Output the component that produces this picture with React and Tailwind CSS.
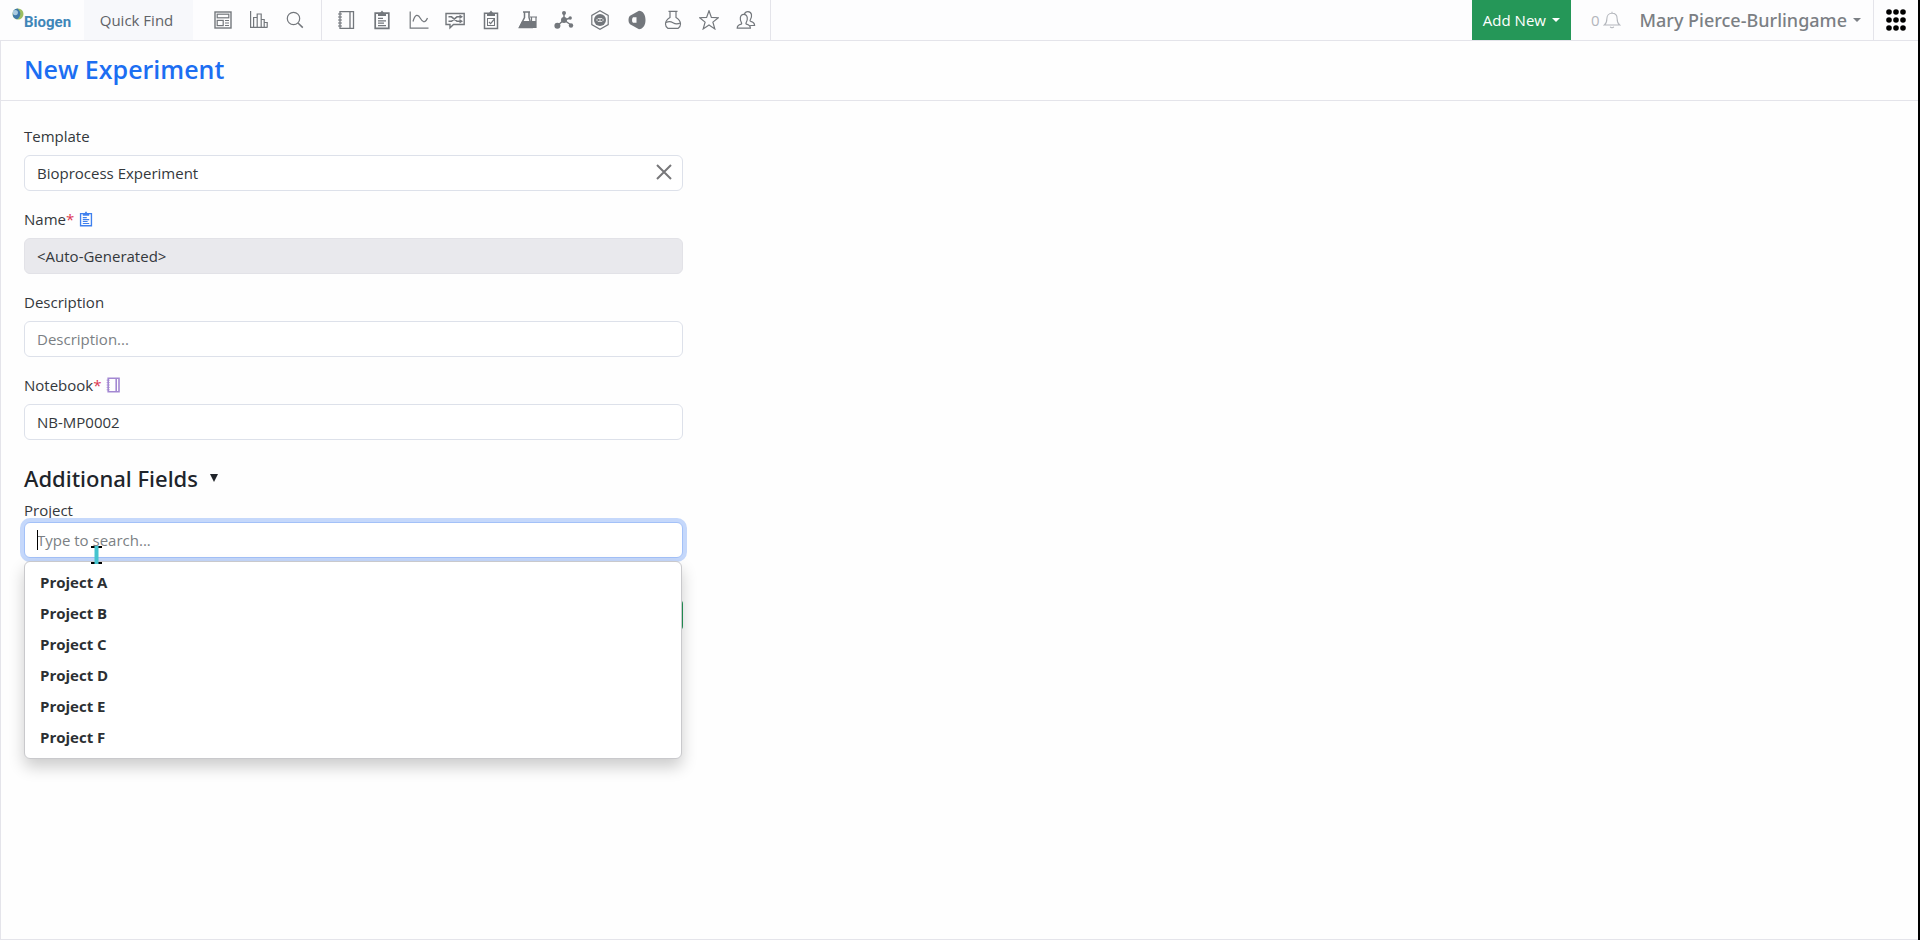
import React, { useState } from 'react';

const Svg = ({ size = 20, children, ...rest }) => (
  <svg width={size} height={size} viewBox="0 0 20 20" fill="none" stroke="currentColor" strokeWidth="1.2" {...rest}>
    {children}
  </svg>
);

const DashboardIcon = () => (
  <Svg>
    <rect x="2" y="2" width="16" height="16" strokeWidth="1.4" />
    <rect x="4.2" y="4.2" width="11.6" height="3.6" />
    <rect x="4.2" y="10.4" width="6" height="5.2" />
    <path d="M12 10.5h4M12 13h4M12 15.5h4" />
  </Svg>
);

const ChartIcon = () => (
  <Svg>
    <path d="M1.6 1v16.4h17M4.6 17V7.5h3.6V17M8.2 17V4h4V17M12.2 9.5h3V17M15.2 12.5h3V17" />
  </Svg>
);

const SearchIcon = () => (
  <Svg>
    <circle cx="8.5" cy="8.5" r="6.2" />
    <path d="M13 13l4.8 4.6" strokeWidth="1.5" />
  </Svg>
);

const NotebookIcon = ({ size, strokeWidth = 1.3 }) => (
  <Svg size={size} strokeWidth={strokeWidth}>
    <path d="M4 1.6h13.5v16.8H4zM14 1.6v16.8" />
    <path d="M2 4h4M2 7h4M2 10h4M2 13h4M2 16h4" strokeWidth="1" />
  </Svg>
);

const ClipboardIcon = ({ size }) => (
  <Svg size={size}>
    <path d="M3.2 3.2h13.6v15.2H3.2z" strokeWidth="1.7" />
    <path d="M6 6V3h2l2-2.6L12 3h2v3z" fill="currentColor" stroke="none" />
    <path d="M6 8.3h5M6 10.8h8M6 13.2h6M6 15.6h8" strokeWidth="1.3" />
  </Svg>
);

const CurveIcon = () => (
  <Svg>
    <path d="M1.2 1.5v16.7h18.3" />
    <path d="M4 11.5C6 4 9 3.8 11.5 8.5s5 4.2 7-.5" />
  </Svg>
);

const WorkflowIcon = () => (
  <Svg>
    <path d="M1 3.5h18.2v11H8.5L5 17.8v-3.3H1z" strokeWidth="1.4" />
    <path d="M3.5 6.8h3l5.5 4.5h4M3.5 11.3h3L12 6.8h4" strokeWidth="1.6" />
    <path d="M14.5 4.6L18 6.8 14.5 9zM14.5 9.1l3.5 2.2-3.5 2.2z" fill="currentColor" stroke="none" />
  </Svg>
);

const TaskIcon = () => (
  <Svg>
    <path d="M3.5 3.2h13v15.2h-13z" strokeWidth="1.5" />
    <path d="M6 6V3h2l2-2.6L12 3h2v3z" fill="currentColor" stroke="none" />
    <rect x="6.5" y="8.5" width="7" height="7" strokeWidth="1" />
    <path d="M8 12l1.6 1.6L13.5 9" />
  </Svg>
);

const LabIcon = () => (
  <Svg>
    <path d="M5 2h7M6.5 2v5.5l-5 10H14l-3-10V2" strokeWidth="1.5" />
    <path d="M4.5 11.5H12l2 6H1.5z" fill="currentColor" />
    <path d="M12 7h7M13.5 7v10.5H18V7" />
    <path d="M13.5 11H18v6.5h-4.5z" fill="currentColor" stroke="none" />
  </Svg>
);

const MoleculeIcon = () => (
  <Svg>
    <path d="M10 10V4M10 10l-6.5 5.5M10 10l6.5-2M10 10l7 5" strokeWidth="1.5" />
    <g fill="currentColor" stroke="none">
      <circle cx="10" cy="10" r="3" />
      <circle cx="10" cy="3" r="2" />
      <circle cx="3.4" cy="15.8" r="3" />
      <circle cx="16.2" cy="8" r="1.7" />
      <circle cx="17" cy="15.5" r="2.2" />
    </g>
  </Svg>
);

const HexagonIcon = () => (
  <Svg>
    <path d="M10 .8l8.200 4.600v9.200L10 19.200l-8.200-4.600V5.400z" />
    <circle cx="10" cy="10" r="6" fill="currentColor" stroke="none" />
    <path d="M6.5 10L8 8.5h4l1.5 1.5-1.5 1.5H8zM10 8.5v3" stroke="white" strokeWidth=".7" />
  </Svg>
);

const PlasmidIcon = () => (
  <Svg>
    <path
      d="M12 .8c4 .2 6.5 3.8 6.5 9.2s-2.5 9-6.5 9.2l-9-5c-1-1-1.5-2.4-1.5-4.2S2 6.800 3 5.800zM6 7.200c-1.300 1.200-1.300 4.400 0 5.600h3.500V7.200z"
      fill="currentColor"
      fillRule="evenodd"
      stroke="none"
    />
  </Svg>
);

const FlaskIcon = () => (
  <Svg>
    <path d="M5.5 1.3h9M7 1.3v6.2C3.8 9.5 2.5 12 2.5 14c0 1.8.8 3.3 2.3 4.3h10.400c1.500-1 2.300-2.500 2.300-4.300 0-2-1.300-4.500-4.500-6.500V1.300" />
    <path d="M3 12.500c3-1.500 5-1 7 .2s4.500 1.500 7.200.3" />
  </Svg>
);

const StarIcon = () => (
  <Svg>
    <path d="M10 .8l2.400 6.600 6.900.3-5.400 4.400 1.900 6.800-5.800-3.900-5.800 3.900 1.900-6.800L.7 7.700l6.900-.3z" />
  </Svg>
);

const PeopleIcon = () => (
  <Svg>
    <path d="M1.2 18.2c0-2.500 1-3.200 4-4 .6-.3.6-1 .2-1.600C3.800 10.400 3.400 4.400 7.800 4.400s4 6 2.400 8.200c-.4.6-.4 1.300.2 1.600 3 .8 4 1.500 4 4z" />
    <path d="M8.3 4.2c.6-1.700 1.800-2.600 3.600-2.600 4.500 0 4.200 5.500 2.500 8-.5.700-.4 1.400.3 1.700 3 .8 3.900 1.600 3.900 4.200h-4.500" />
  </Svg>
);

const BellIcon = () => (
  <Svg size={18}>
    <path d="M1.500 15.500c2.500-2 2.800-4 2.800-7 0-3.500 2.200-6 5.700-6s5.700 2.500 5.700 6c0 3 .3 5 2.800 7zM10 2.500V.8M8 17.500c.8 1.600 3.200 1.600 4 0" />
  </Svg>
);

const Caret = () => (
  <svg width="8" height="4" viewBox="0 0 8 4" fill="currentColor">
    <path d="M0 0h8L4 4z" />
  </svg>
);

const AppsIcon = () => (
  <svg width="20" height="22" viewBox="0 0 20 22" fill="currentColor">
    {[3, 11, 19].map((y) => [3, 10, 17].map((x) => <circle key={`${x}-${y}`} cx={x} cy={y} r="2.8" />))}
  </svg>
);

const LogoMark = () => (
  <svg width="13" height="13" viewBox="0 0 13 13">
    <circle cx="7" cy="6" r="5.5" fill="#9dbf62" />
    <path d="M6.5 .5A5.5 5.5 0 0 0 6 11.3c3.5-2 5-7 .5-10.8z" fill="#3f78a8" />
    <circle cx="4.3" cy="4.6" r="2.6" fill="#a9c9df" />
  </svg>
);

const mainTools = [
  { label: 'Dashboard', Icon: DashboardIcon },
  { label: 'Charts', Icon: ChartIcon },
  { label: 'Search', Icon: SearchIcon },
];

const moduleTools = [
  { label: 'Notebooks', Icon: NotebookIcon },
  { label: 'Experiments', Icon: ClipboardIcon },
  { label: 'Results', Icon: CurveIcon },
  { label: 'Workflows', Icon: WorkflowIcon },
  { label: 'Tasks', Icon: TaskIcon },
  { label: 'Inventory', Icon: LabIcon },
  { label: 'Molecules', Icon: MoleculeIcon },
  { label: 'Reagents', Icon: HexagonIcon },
  { label: 'Plasmids', Icon: PlasmidIcon },
  { label: 'Samples', Icon: FlaskIcon },
  { label: 'Favorites', Icon: StarIcon },
  { label: 'Users', Icon: PeopleIcon },
];

const projects = ['Project A', 'Project B', 'Project C', 'Project D', 'Project E', 'Project F'];

const ToolLink = ({ label, Icon }) => (
  <a href="#" aria-label={label} className="flex flex-1 items-center justify-center hover:text-gray-900">
    <Icon />
  </a>
);

const Header = () => (
  <header className="flex h-[41px] border-b border-[#e4e4ea] bg-[#fdfdfe] text-[#73777c]">
    <a href="#" aria-label="Biogen" className="flex w-[84px] pl-[11px] pt-2">
      <LogoMark />
      <span className="pt-1 font-['Roboto'] text-[15px] font-bold leading-5 text-[#3f86b8]">Biogen</span>
    </a>
    <button className="w-[109px] bg-[#f7f8fb] pr-1 text-[15px] text-[#5f6368]">Quick Find</button>
    <nav className="flex w-[129px] border-r border-[#e4e4ea] pl-3 pr-2">
      {mainTools.map((t) => <ToolLink key={t.label} {...t} />)}
    </nav>
    <nav className="flex w-[449px] border-r border-[#e4e4ea] px-[6px]">
      {moduleTools.map((t) => <ToolLink key={t.label} {...t} />)}
    </nav>

    <div className="ml-auto flex">
      <button className="flex w-[99px] items-center justify-center gap-1.5 bg-[#259758] text-[15px] text-white">
        Add New <Caret />
      </button>
      <button aria-label="Notifications" className="flex items-center gap-1 pl-5 text-[15px] text-[#b3b6bc]">
        0 <BellIcon />
      </button>
      <button className="flex items-center gap-1.5 border-r border-[#e4e4ea] pl-[18px] pr-3 font-['Noto_Sans'] text-[18px] font-medium text-[#7b7f84]">
        Mary Pierce-Burlingame <Caret />
      </button>
      <button aria-label="Apps" className="w-11 pl-3 text-black">
        <AppsIcon />
      </button>
    </div>
  </header>
);

const inputClass =
  'block h-9 w-full rounded-md border border-[#dde1ea] bg-white px-3 text-[15px] text-[#34383c] placeholder:text-[#7b7f84] outline-none';

const Field = ({ id, label, required, icon, children }) => (
  <div className="mb-4">
    <label htmlFor={id} className="mb-[7px] flex h-6 items-center">
      {label}
      {required && <span className="text-[#dc3550]">*</span>}
      {icon}
    </label>
    {children}
  </div>
);

const App = () => {
  const [template, setTemplate] = useState('Bioprocess Experiment');
  const [description, setDescription] = useState('');
  const [notebook, setNotebook] = useState('NB-MP0002');
  const [project, setProject] = useState('');

  return (
    <div className="flex min-h-screen flex-col border-r-2 border-black bg-[#fefefe] font-['Open_Sans',sans-serif] text-[15px] text-[#34383c]">
      <Header />
      <main className="flex-1 border-b border-l border-[#e4e4ea]">
        <div className="h-[60px] border-b border-[#e4e4ea] pl-[23px]">
          <h1 className="font-['Open_Sans'] text-[25px] font-semibold leading-[56px] text-[#1c6ef2]">New Experiment</h1>
        </div>

        <form className="ml-[23px] mt-[23px] w-[35%] min-w-[320px] max-w-[659px]" onSubmit={(e) => e.preventDefault()}>
          <Field id="template" label="Template">
            <div className="relative">
              <input id="template" className={inputClass} value={template} onChange={(e) => setTemplate(e.target.value)} />
              <button
                type="button"
                aria-label="Clear template"
                onClick={() => setTemplate('')}
                className="absolute right-[10px] top-2 text-[#77777a]"
              >
                <svg width="18" height="18" viewBox="0 0 18 18" stroke="currentColor" strokeWidth="2">
                  <path d="M2 2l14 14M16 2L2 16" />
                </svg>
              </button>
            </div>
          </Field>

          <Field id="name" label="Name" required icon={<span className="ml-1 text-[#3f80ee]"><ClipboardIcon size={16} /></span>}>
            <input
              id="name"
              readOnly
              value="<Auto-Generated>"
              className="block h-9 w-full rounded-md border border-[#e2e2e7] bg-[#e9e9ed] px-3 outline-none"
            />
          </Field>

          <Field id="description" label="Description">
            <input
              id="description"
              placeholder="Description..."
              className={inputClass}
              value={description}
              onChange={(e) => setDescription(e.target.value)}
            />
          </Field>

          <Field
            id="notebook"
            label="Notebook"
            required
            icon={<span className="ml-1 text-[#a388d2]"><NotebookIcon size={16} strokeWidth={2} /></span>}
          >
            <input id="notebook" className={inputClass} value={notebook} onChange={(e) => setNotebook(e.target.value)} />
          </Field>

          <h2 className="mt-[22px] flex h-8 items-center font-['Noto_Sans'] text-[22px] font-medium text-[#20242a]">
            Additional Fields
            <svg className="ml-3" width="8" height="8" viewBox="0 0 8 8" fill="currentColor">
              <path d="M0 0h8L4 8z" />
            </svg>
          </h2>

          <label htmlFor="project" className="mb-0.5 mt-1.5 block leading-5">Project</label>
          <div className="relative">
            <input
              id="project"
              placeholder="Type to search..."
              className="block h-9 w-full rounded-md border border-[#a3c1f8] bg-white px-3 placeholder:text-[#7b7f84] outline-none ring-4 ring-[#c5d8fb]"
              value={project}
              onChange={(e) => setProject(e.target.value)}
            />
            <span className="absolute left-[13px] top-2 h-5 w-px bg-black" />
            <ul className="absolute left-0 right-px top-[39px] z-10 rounded-md border border-[#c9c9cc] bg-white py-[5px] shadow-[0_8px_16px_rgba(0,0,0,0.2)]">
              {projects.map((p) => (
                <li key={p}>
                  <button
                    type="button"
                    onClick={() => setProject(p)}
                    className="block h-[31px] w-full px-[15px] text-left font-bold text-[#2b2f33]"
                  >
                    {p}
                  </button>
                </li>
              ))}
            </ul>
            {/* text pointer over the search box */}
            <svg className="absolute left-[67px] top-[24px] z-20" width="11" height="18" viewBox="0 0 11 18">
              <path d="M0 1h11M0 17h11" stroke="black" strokeWidth="2" />
              <path d="M5.500 0v18" stroke="#45c4cf" strokeWidth="4" />
            </svg>
          </div>

          <div className="mt-[42px] flex justify-end">
            <button type="submit" aria-label="Submit" className="h-[30px] w-20 rounded-sm bg-[#259758]" />
          </div>
        </form>
      </main>
    </div>
  );
};

export default App;
